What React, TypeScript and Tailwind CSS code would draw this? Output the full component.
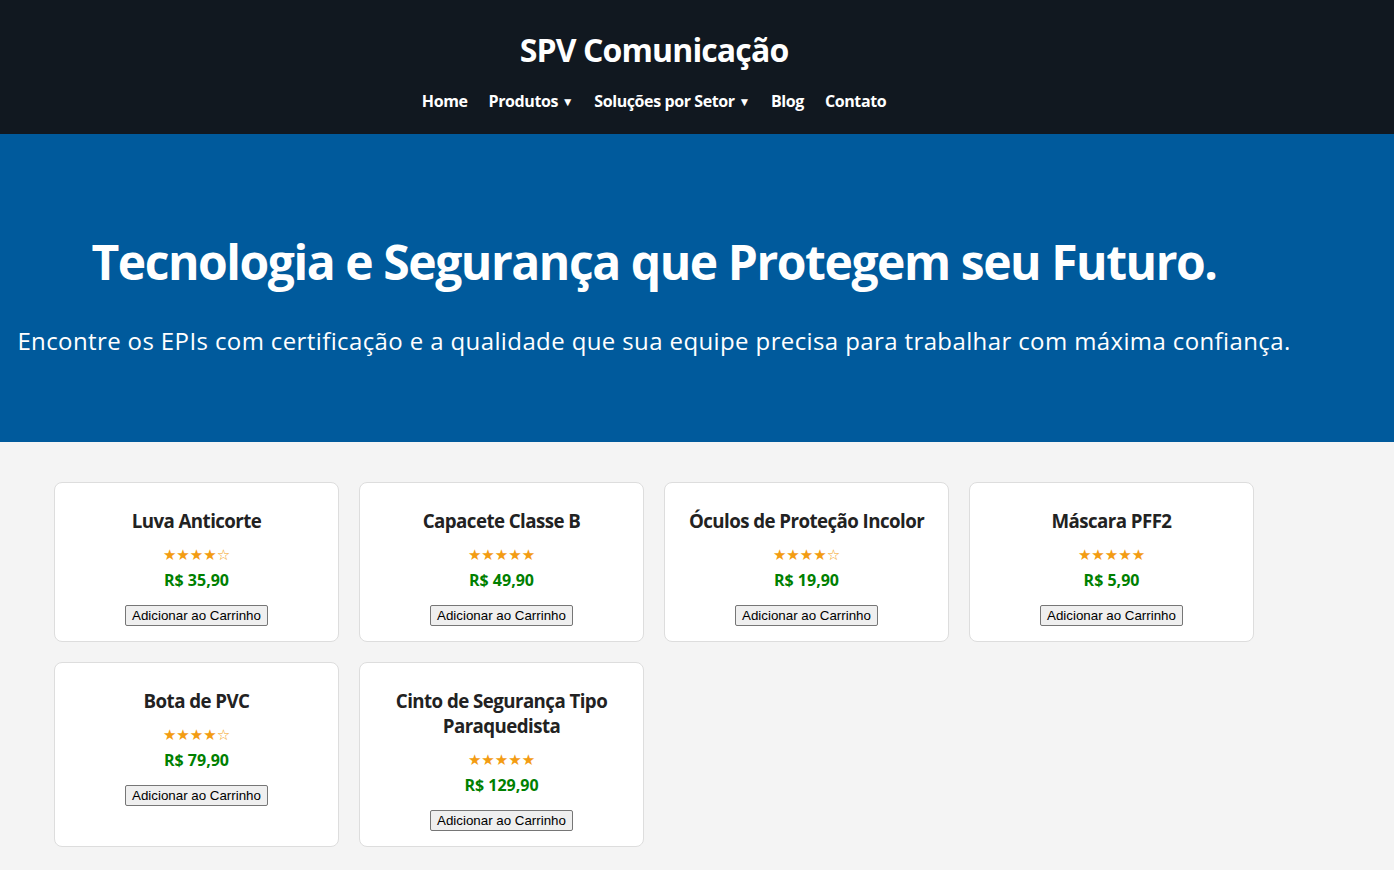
const products = [
  { name: "Luva Anticorte", stars: "★★★★☆", price: "R$ 35,90" },
  { name: "Capacete Classe B", stars: "★★★★★", price: "R$ 49,90" },
  { name: "Óculos de Proteção Incolor", stars: "★★★★☆", price: "R$ 19,90" },
  { name: "Máscara PFF2", stars: "★★★★★", price: "R$ 5,90" },
  { name: "Bota de PVC", stars: "★★★★☆", price: "R$ 79,90" },
  { name: "Cinto de Segurança Tipo Paraquedista", stars: "★★★★★", price: "R$ 129,90" },
];

function ProductCard({ name, stars, price }: { name: string; stars: string; price: string }) {
  return (
    <div className="flex flex-col items-center bg-white border border-[#dddddd] rounded-lg px-[15px] pt-[25px] pb-[15px] text-center">
      <h3 className="text-[18.72px] leading-[25px] font-bold tracking-[-0.03em] text-[#222222] max-w-[240px]">{name}</h3>
      <p className="mt-[13px] text-[15px] leading-[19px] text-[#f39c12] font-['DejaVu_Sans',sans-serif]">{stars}</p>
      <p className="mt-[5px] text-[16px] leading-[21px] font-bold text-[#008000]">{price}</p>
      <button className="mt-[14px] h-[21px] px-[6px] border border-[#767676] rounded-[2px] bg-[#efefef] text-[13.33px] leading-[17px] text-black font-['Liberation_Sans',Arial,sans-serif]">
        Adicionar ao Carrinho
      </button>
    </div>
  );
}

export default function App() {
  return (
    <div className="min-h-screen bg-[#f4f4f4] font-['Segoe_UI','Open_Sans',sans-serif]">
      <header className="bg-[#111820] text-white pr-[86px] pt-[28px] pb-[22px] text-center">
        <h1 className="text-[32px] leading-[43px] font-bold tracking-[-0.027em]">SPV Comunicação</h1>
        <nav className="mt-[20px]">
          <ul className="flex justify-center gap-[21px] text-[16px] leading-[21px] font-bold tracking-[-0.025em]">
            <li>Home</li>
            <li>Produtos <span className="text-[12px] align-[1px]">▼</span></li>
            <li>Soluções por Setor <span className="text-[12px] align-[1px]">▼</span></li>
            <li>Blog</li>
            <li>Contato</li>
          </ul>
        </nav>
      </header>

      <section className="bg-[#005a9c] text-white pr-[86px] pt-[96px] pb-[85px] text-center">
        <h1 className="text-[48px] leading-[64px] font-bold tracking-[-0.03em]">Tecnologia e Segurança que Protegem seu Futuro.</h1>
        <p className="mt-[31px] text-[24px] leading-[32px] font-medium tracking-[0.016em]">
          Encontre os EPIs com certificação e a qualidade que sua equipe precisa para trabalhar com máxima confiança.
        </p>
      </section>

      <main className="pr-[86px] pt-[40px] pb-[24px]">
        <div className="max-w-[1200px] mx-auto grid grid-cols-4 gap-5">
          {products.map((p) => (
            <ProductCard key={p.name} {...p} />
          ))}
        </div>
      </main>
    </div>
  );
}
